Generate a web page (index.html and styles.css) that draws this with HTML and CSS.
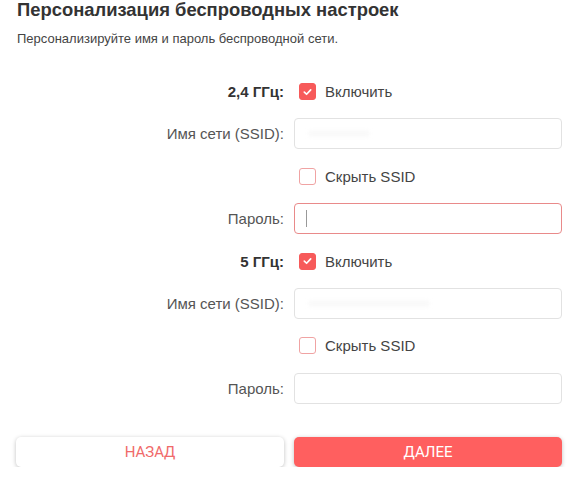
FILE: index.html
```html
<!DOCTYPE html>
<html lang="ru">
<head>
<meta charset="utf-8">
<link rel="stylesheet" href="styles.css">
</head>
<body>
<div class="page">
  <h1 class="title">Персонализация беспроводных настроек</h1>
  <p class="subtitle">Персонализируйте имя и пароль беспроводной сети.</p>
  <div class="form">
    <div class="label bold">2,4 ГГц:</div>
    <div class="control"><span class="cb checked"><svg viewBox="0 0 16 16" width="16" height="16"><path d="M4.6 8.2 L7 10.4 L11.4 5.8" fill="none" stroke="#fff" stroke-width="1.8" stroke-linecap="round" stroke-linejoin="round"/></svg></span><span class="cbtext">Включить</span></div>

    <div class="label">Имя сети (SSID):</div>
    <div class="control"><div class="input"><span class="blur b1"></span></div></div>

    <div class="label"></div>
    <div class="control"><span class="cb"></span><span class="cbtext">Скрыть SSID</span></div>

    <div class="label">Пароль:</div>
    <div class="control"><div class="input focus"><span class="caret"></span></div></div>

    <div class="label bold">5 ГГц:</div>
    <div class="control"><span class="cb checked"><svg viewBox="0 0 16 16" width="16" height="16"><path d="M4.6 8.2 L7 10.4 L11.4 5.8" fill="none" stroke="#fff" stroke-width="1.8" stroke-linecap="round" stroke-linejoin="round"/></svg></span><span class="cbtext">Включить</span></div>

    <div class="label">Имя сети (SSID):</div>
    <div class="control"><div class="input"><span class="blur b2"></span></div></div>

    <div class="label"></div>
    <div class="control"><span class="cb"></span><span class="cbtext">Скрыть SSID</span></div>

    <div class="label">Пароль:</div>
    <div class="control"><div class="input"></div></div>
  </div>
  <div class="buttons">
    <button class="btn back">НАЗАД</button>
    <button class="btn next">ДАЛЕЕ</button>
  </div>
</div>
</body>
</html>
```

FILE: styles.css
```css
html, body {
  margin: 0;
  padding: 0;
  background: #fff;
}
body {
  font-family: "Liberation Sans", Arial, sans-serif;
  color: #333;
}
.page {
  width: 546px;
  padding: 0 20px 0 16px;
}
.title {
  margin: 0;
  padding-top: 0;
  font-size: 18.4px;
  line-height: 20px;
  font-weight: bold;
  color: #333;
  margin-left: 1px;
}
.subtitle {
  margin: 11px 0 0 1px;
  font-size: 13px;
  line-height: 16px;
  color: #444;
}
.form {
  margin-top: 29px;
  display: grid;
  grid-template-columns: 1fr 1fr;
  column-gap: 10px;
  grid-auto-rows: 31px;
  row-gap: 11.4px;
}
.label {
  display: flex;
  align-items: center;
  justify-content: flex-end;
  font-size: 15px;
  color: #555;
  padding-right: 0;
}
.label.bold {
  font-weight: bold;
  color: #333;
}
.control {
  display: flex;
  align-items: center;
}
.cb {
  box-sizing: border-box;
  width: 17px;
  height: 17px;
  margin-left: 5px;
  border: 1.5px solid #f0a3a3;
  border-radius: 3px;
  display: inline-flex;
  align-items: center;
  justify-content: center;
}
.cb.checked {
  background: #f75a5a;
  border-color: #f75a5a;
}
.cb svg {
  display: block;
}
.cbtext {
  margin-left: 9px;
  font-size: 15px;
  color: #444;
}
.input {
  box-sizing: border-box;
  width: 100%;
  height: 31px;
  border: 1px solid #e2e2e2;
  border-radius: 4px;
  position: relative;
  background: #fff;
}
.input.focus {
  border-color: #e98a8a;
}
.caret {
  position: absolute;
  left: 11px;
  top: 6px;
  width: 1px;
  height: 17px;
  background: #999;
}
.blur {
  position: absolute;
  top: 12px;
  height: 5px;
  background: #f7f7f7;
  filter: blur(2px);
}
.b1 { left: 14px; width: 60px; }
.b2 { left: 14px; width: 120px; }
.buttons {
  margin-top: 33px;
  display: grid;
  grid-template-columns: 1fr 1fr;
  column-gap: 10px;
}
.btn {
  height: 30px;
  border: none;
  border-radius: 5px;
  font-family: Roboto, "Liberation Sans", Arial, sans-serif;
  font-size: 15px;
  cursor: pointer;
}
.back {
  background: #fff;
  color: #f06a6a;
  box-shadow: 0 1px 4px rgba(0,0,0,0.25);
}
.next {
  background: #ff5f5f;
  color: #fff;
  box-shadow: 0 1px 4px rgba(0,0,0,0.25);
}
```
